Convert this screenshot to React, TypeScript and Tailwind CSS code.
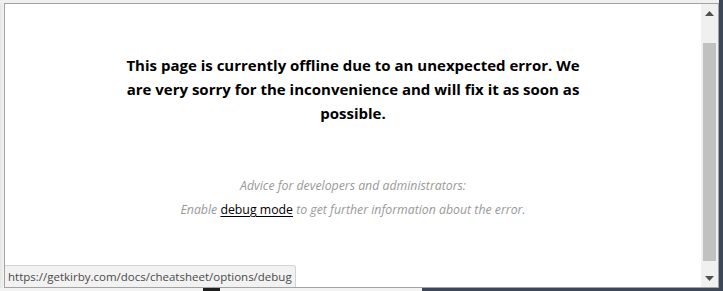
export default function App() {
  return (
    <div className="relative h-[291px] w-[723px] overflow-hidden bg-[#3d4757]">
      {/* strip under the window */}
      <div className="absolute bottom-0 left-0 h-[4px] w-[422px] bg-[#f3f3f3]" />
      <div className="absolute bottom-0 left-[203px] h-[4px] w-[17px] bg-[#1e1e1e]" />

      {/* browser window */}
      <div className="relative flex h-[288px] w-[719px] flex-col bg-[#f0f0f0]">
        <div className="h-[3px] shrink-0" />
        <div className="flex min-h-0 flex-1">
          <div className="w-[4px] shrink-0 bg-gradient-to-r from-[#e6e6e6] to-[#f4f4f4]" />
          <div className="flex min-w-0 flex-1 border border-[#a3a3a3] bg-white">
            <main className="flex flex-1 flex-col items-center pt-[49px] font-['Open_Sans','Noto_Sans',sans-serif]">
              <h1 className="w-[470px] text-center text-[15px] font-bold leading-[24px] text-black">
                This page is currently offline due to an unexpected error. We are very sorry for the inconvenience and
                will fix it as soon as possible.
              </h1>
              <div className="mt-[49px] text-center text-[12.3px] italic leading-[24px] text-[#999999]">
                <p>Advice for developers and administrators:</p>
                <p>
                  Enable{" "}
                  <a href="#" className="not-italic text-black underline underline-offset-2">
                    debug mode
                  </a>{" "}
                  to get further information about the error.
                </p>
              </div>
            </main>

            {/* scrollbar */}
            <div className="flex w-[17px] shrink-0 flex-col items-center bg-[#f0f0f0]">
              <div className="flex h-[17px] w-full items-center justify-center pt-[1px]">
                <svg width="9" height="5" viewBox="0 0 9 5">
                  <path d="M4.5 0 L9 5 L0 5 Z" fill="#505050" />
                </svg>
              </div>
              <div className="mt-[22px] h-[218px] w-[13px] bg-[#c1c1c1]" />
              <div className="flex-1" />
              <div className="flex h-[17px] w-full items-center justify-center">
                <svg width="9" height="5" viewBox="0 0 9 5">
                  <path d="M0 0 L9 0 L4.5 5 Z" fill="#505050" />
                </svg>
              </div>
            </div>
          </div>
        </div>

        {/* status tooltip */}
        <div className="absolute bottom-[1px] left-[5px] flex h-[22px] items-center rounded-tr-[3px] border-t border-r border-[#d4d4d4] bg-[#f2f2f2] pl-[3px] pr-[3px] font-['Open_Sans','Noto_Sans',sans-serif] text-[11.5px] text-[#4a4a4a]">
          https://getkirby.com/docs/cheatsheet/options/debug
        </div>
      </div>
    </div>
  );
}
